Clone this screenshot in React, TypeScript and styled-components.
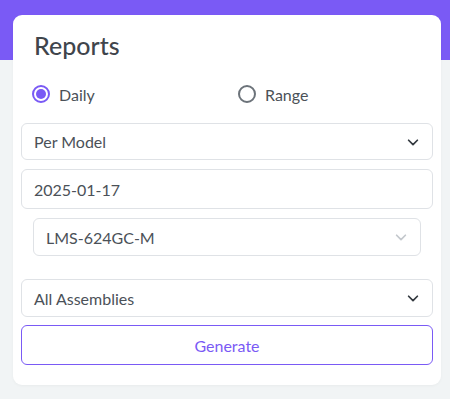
import styled, { createGlobalStyle } from "styled-components"

const GlobalStyle = createGlobalStyle`
    html, body {
        margin: 0;
        padding: 0;
        background: #f1f4f5;
        font-family: "Lato", "Noto Sans", sans-serif;
    }
    * { box-sizing: border-box; }
`
const Page = styled.div`
    width: 450px;
    height: 399px;
    background: linear-gradient(#7a5af5 0, #7a5af5 60px, #f1f4f5 60px);
    padding: 15px 9px 0 13px;
`
const Card = styled.div`
    width: 428px;
    height: 370px;
    background: #ffffff;
    border-radius: 9px;
    box-shadow: 0 1px 3px rgba(0,0,0,0.04);
    padding: 15px 8px 0 8px;
`
const Title = styled.h2`
    margin: 0 0 0 13px;
    font-size: 25px;
    font-weight: 500;
    color: #3f454c;
    line-height: 30px;
`
const RadioRow = styled.div`
    display: grid;
    grid-template-columns: 1fr 1fr;
    margin-top: 24px;
    margin-bottom: 19px;
`
const RadioLabel = styled.label`
    display: flex;
    align-items: center;
    gap: 9px;
    padding-left: 11px;
    font-size: 16px;
    color: #4b5158;
    height: 20px;
`
const Dot = styled.span<{ $on: boolean }>`
    width: 18px;
    height: 18px;
    border-radius: 50%;
    border: 2px solid ${p => p.$on ? "#7a5af5" : "#6c737a"};
    display: flex;
    align-items: center;
    justify-content: center;
    &::after {
        content: "";
        display: ${p => p.$on ? "block" : "none"};
        width: 10px;
        height: 10px;
        border-radius: 50%;
        background: #7a5af5;
    }
`
const Field = styled.div<{ $h: number; $inset?: boolean; $gap: number }>`
    height: ${p => p.$h}px;
    margin: 0 ${p => p.$inset ? 12 : 0}px ${p => p.$gap}px;
    border: 1px solid #dfe2e6;
    border-radius: 6px;
    display: flex;
    align-items: center;
    justify-content: space-between;
    padding: 0 12px;
    font-size: 16px;
    color: #4b5158;
`
const Button = styled.button`
    width: 100%;
    height: 40px;
    border: 1px solid #7a5af5;
    border-radius: 6px;
    background: #ffffff;
    color: #7a5af5;
    font-family: inherit;
    font-size: 16px;
`
const Chevron = ({ color }: { color: string }) => (
    <svg width="14" height="14" viewBox="0 0 16 16" fill="none">
        <path d="M3 6l5 5 5-5" stroke={color} strokeWidth="2" strokeLinecap="round" strokeLinejoin="round" />
    </svg>
)

function App() {
    return (
        <>
            <GlobalStyle />
            <Page>
                <Card>
                    <Title>Reports</Title>
                    <RadioRow>
                        <RadioLabel><Dot $on={true} />Daily</RadioLabel>
                        <RadioLabel><Dot $on={false} />Range</RadioLabel>
                    </RadioRow>
                    <Field $h={37} $gap={9}>Per Model<Chevron color="#343a40" /></Field>
                    <Field $h={40} $gap={9}>2025-01-17</Field>
                    <Field $h={38} $gap={23} $inset>LMS-624GC-M<Chevron color="#c4c8cd" /></Field>
                    <Field $h={38} $gap={8}>All Assemblies<Chevron color="#343a40" /></Field>
                    <Button>Generate</Button>
                </Card>
            </Page>
        </>
    )
}

export default App
